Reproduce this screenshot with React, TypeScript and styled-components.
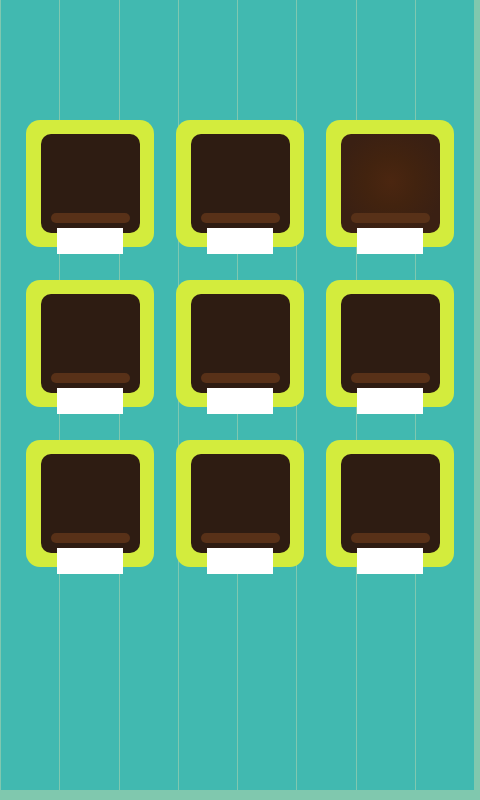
import React from "react";
import styled, { createGlobalStyle } from "styled-components";

const Global = createGlobalStyle`
  html, body { margin: 0; padding: 0; }
  body {
    width: 480px;
    height: 800px;
    background: #80c8ae;
    font-family: "Liberation Sans", Arial, sans-serif;
    overflow: hidden;
  }
`;

const Board = styled.main`
  width: 474px;
  height: 790px;
  box-sizing: border-box;
  background-color: #41b9b0;
  background-image: repeating-linear-gradient(
    to right,
    #7fc8b0 0px,
    #7fc8b0 1px,
    transparent 1px,
    transparent 59.25px
  );
  padding: 120px 0 0 26px;
`;

const Grid = styled.div`
  display: grid;
  grid-template-columns: repeat(3, 128px);
  column-gap: 22px;
  row-gap: 33px;
`;

const Card = styled.div`
  width: 128px;
  height: 127px;
  box-sizing: border-box;
  padding: 14px 14px 0 14px;
  background: #d3ec3d;
  border-radius: 14px;
  display: flex;
  flex-direction: column;
  align-items: center;
`;

const Screen = styled.div<{ $glow?: boolean }>`
  width: 99px;
  height: 99px;
  flex: none;
  box-sizing: border-box;
  border-radius: 10px;
  background: ${(p) =>
    p.$glow
      ? "radial-gradient(circle at 50% 48%, #4b2610 0%, #42230f 35%, #3a2013 75%)"
      : "#2e1c12"};
  display: flex;
  flex-direction: column;
  justify-content: flex-end;
  align-items: center;
  padding-bottom: 10px;
`;

const Bar = styled.div`
  width: 79px;
  height: 10px;
  border-radius: 5px;
  background: #583118;
`;

const Tab = styled.div`
  width: 66px;
  height: 26px;
  flex: none;
  margin-top: -5px;
  background: #ffffff;
`;

const items = [0, 1, 2, 3, 4, 5, 6, 7, 8];

export default function App() {
  return (
    <>
      <Global />
      <Board>
        <Grid>
          {items.map((i) => (
            <Card key={i}>
              <Screen $glow={i === 2}>
                <Bar />
              </Screen>
              <Tab />
            </Card>
          ))}
        </Grid>
      </Board>
    </>
  );
}
